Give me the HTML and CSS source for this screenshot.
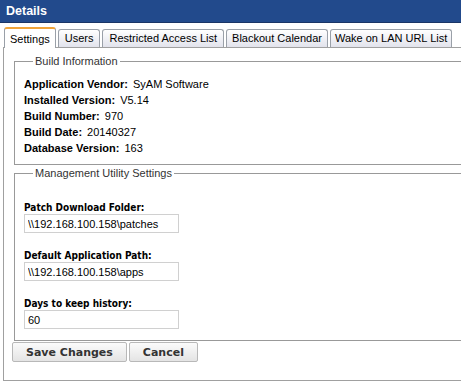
FILE: index.html
```html
<!DOCTYPE html>
<html lang="en">
<head>
<meta charset="utf-8">
<title>Details</title>
<link rel="stylesheet" href="styles.css">
</head>
<body>
<div class="titlebar">Details</div>
<ul class="tabs">
  <li class="tab active">Settings</li>
  <li class="tab">Users</li>
  <li class="tab">Restricted Access List</li>
  <li class="tab">Blackout Calendar</li>
  <li class="tab">Wake on LAN URL List</li>
</ul>
<div class="panel">
  <fieldset class="group">
    <legend>Build Information</legend>
    <div class="info-row"><b>Application Vendor:</b> SyAM Software</div>
    <div class="info-row"><b>Installed Version:</b> V5.14</div>
    <div class="info-row"><b>Build Number:</b> 970</div>
    <div class="info-row"><b>Build Date:</b> 20140327</div>
    <div class="info-row"><b>Database Version:</b> 163</div>
  </fieldset>
  <fieldset class="group settings">
    <legend>Management Utility Settings</legend>
    <div class="field">
      <label for="patch">Patch Download Folder:</label>
      <input id="patch" type="text" value="\\192.168.100.158\patches">
    </div>
    <div class="field">
      <label for="apppath">Default Application Path:</label>
      <input id="apppath" type="text" value="\\192.168.100.158\apps">
    </div>
    <div class="field">
      <label for="days">Days to keep history:</label>
      <input id="days" type="text" value="60">
    </div>
  </fieldset>
  <div class="actions">
    <button type="button" class="btn">Save Changes</button>
    <button type="button" class="btn">Cancel</button>
  </div>
</div>
</body>
</html>
```

FILE: styles.css
```css
html {
  overflow: hidden;
}
body {
  margin: 0;
  width: 520px;
  background-color: #fff;
  font-family: 'Liberation Sans', Arial, sans-serif;
  font-size: 11px;
  color: #000;
}
.titlebar {
  height: 22px;
  line-height: 23px;
  padding-left: 6px;
  background-color: #224a8c;
  border-bottom: 1px solid #1a3566;
  color: #fff;
  font-weight: bold;
  font-size: 12.5px;
}
.tabs {
  list-style: none;
  margin: 4px 0 0 0;
  padding: 0 0 0 4px;
  display: flex;
  align-items: flex-end;
  gap: 2px;
  height: 20px;
}
.tab {
  height: 17px;
  line-height: 17px;
  padding: 0 6px;
  border: 1px solid #9aa0a8;
  border-bottom: none;
  border-radius: 3px 3px 0 0;
  background: linear-gradient(#ffffff, #e2e3ec);
  color: #000;
}
.tab:nth-child(4) {
  padding: 0 5px;
}
.tab:last-child {
  padding: 0 4px;
}
.tab.active {
  height: 19px;
  line-height: 20px;
  padding: 0 5px;
  border-top: 2px solid #f0a43a;
  background: #fff;
  position: relative;
  z-index: 1;
  margin-bottom: -1px;
}
.panel {
  margin-left: 3px;
  border: 1px solid #a0a0a0;
  padding: 7px 0 18px 0;
}
.group {
  margin: 0 0 0 10px;
  border: 1px solid #999;
  padding: 8px 10px 8px 9px;
}
.group legend {
  padding: 0 2px;
  margin-left: 9px;
  line-height: 13px;
  color: #333;
}
.info-row {
  line-height: 16px;
}
.info-row b {
  margin-right: 2px;
}
.settings {
  margin-top: 2px;
  padding-top: 22px;
  padding-bottom: 11px;
}
.field {
  margin-top: 17px;
}
legend + .field {
  margin-top: 0;
}
.field label {
  display: block;
  font-family: 'DejaVu Sans Condensed', 'DejaVu Sans', Verdana, sans-serif;
  font-stretch: condensed;
  font-weight: bold;
  font-size: 10px;
  line-height: 12px;
}
.field input {
  display: block;
  box-sizing: border-box;
  width: 155px;
  height: 19px;
  margin: 0;
  padding: 0 3px;
  border: 1px solid #d0d0d0;
  font-family: 'Liberation Sans', Arial, sans-serif;
  font-size: 11px;
  color: #000;
}
.actions {
  display: flex;
  gap: 2px;
  padding-left: 8px;
  margin-top: 1px;
}
.btn {
  height: 20px;
  padding: 0 13px;
  border: 1px solid #b8b8b8;
  border-radius: 2px;
  background: linear-gradient(#fbfbfb, #e4e4e4);
  font-family: 'DejaVu Sans', Verdana, sans-serif;
  font-weight: bold;
  font-size: 11px;
  color: #333;
}
```
